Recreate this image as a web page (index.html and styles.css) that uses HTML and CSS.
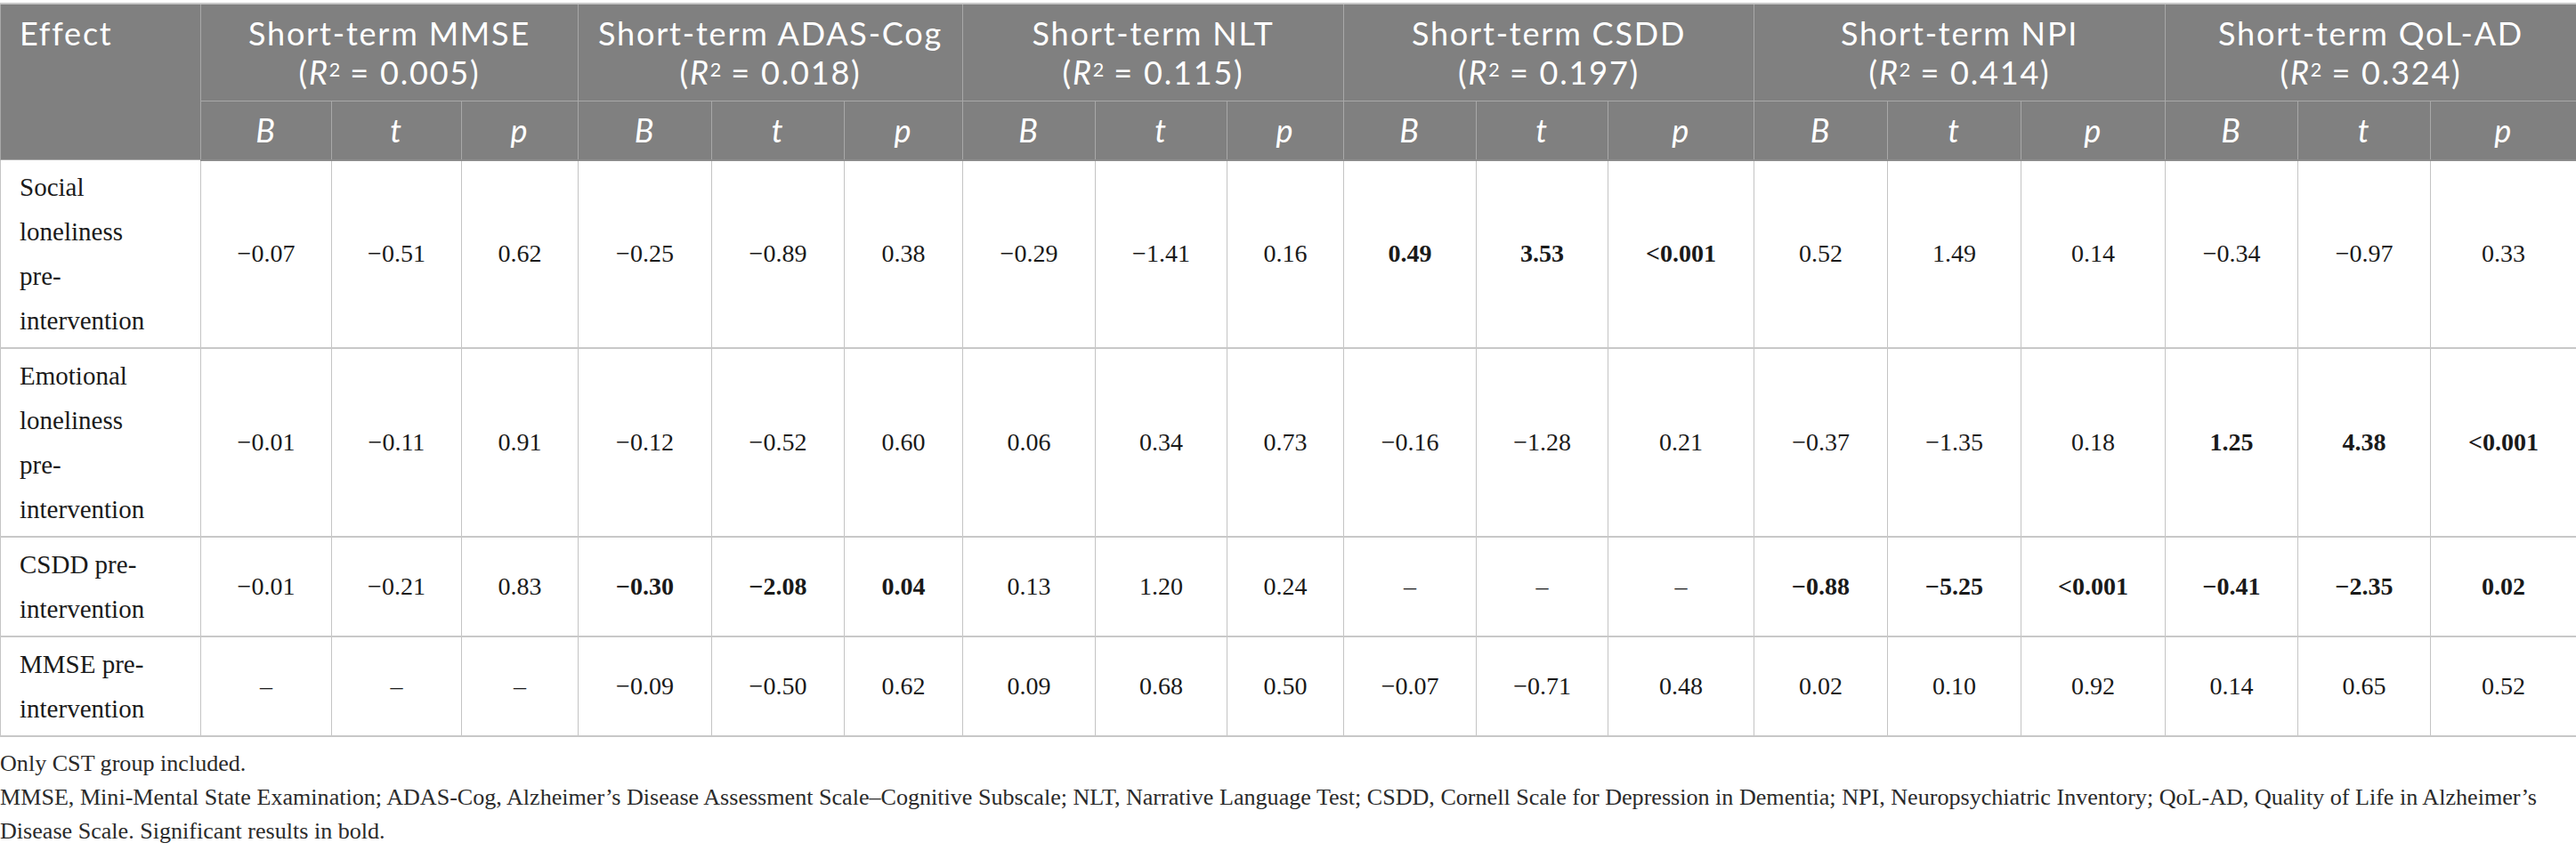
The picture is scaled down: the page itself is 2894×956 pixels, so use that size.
FILE: index.html
```html
<!DOCTYPE html>
<html lang="en">
<head>
<meta charset="utf-8">
<title>Table</title>
<link rel="stylesheet" href="styles.css">
</head>
<body>
<div class="wrap">
<table class="results">
<colgroup>
<col class="c-effect">
<col class="c147"><col class="c146"><col class="c131">
<col class="c150"><col class="c149"><col class="c133">
<col class="c149"><col class="c148"><col class="c131">
<col class="c149"><col class="c148"><col class="c164">
<col class="c150"><col class="c150"><col class="c162">
<col class="c149"><col class="c149"><col class="c164">
</colgroup>
<thead>
<tr>
<th rowspan="2" class="effect-h">Effect</th>
<th colspan="3">Short-term MMSE<br>(<i>R</i><sup>2</sup> = 0.005)</th>
<th colspan="3">Short-term ADAS-Cog<br>(<i>R</i><sup>2</sup> = 0.018)</th>
<th colspan="3">Short-term NLT<br>(<i>R</i><sup>2</sup> = 0.115)</th>
<th colspan="3">Short-term CSDD<br>(<i>R</i><sup>2</sup> = 0.197)</th>
<th colspan="3">Short-term NPI<br>(<i>R</i><sup>2</sup> = 0.414)</th>
<th colspan="3">Short-term QoL-AD<br>(<i>R</i><sup>2</sup> = 0.324)</th>
</tr>
<tr class="sub">
<th><i>B</i></th><th><i>t</i></th><th><i>p</i></th>
<th><i>B</i></th><th><i>t</i></th><th><i>p</i></th>
<th><i>B</i></th><th><i>t</i></th><th><i>p</i></th>
<th><i>B</i></th><th><i>t</i></th><th><i>p</i></th>
<th><i>B</i></th><th><i>t</i></th><th><i>p</i></th>
<th><i>B</i></th><th><i>t</i></th><th><i>p</i></th>
</tr>
</thead>
<tbody>
<tr>
<td class="effect">Social loneliness pre-intervention</td>
<td>−0.07</td><td>−0.51</td><td>0.62</td>
<td>−0.25</td><td>−0.89</td><td>0.38</td>
<td>−0.29</td><td>−1.41</td><td>0.16</td>
<td><b>0.49</b></td><td><b>3.53</b></td><td><b>&lt;0.001</b></td>
<td>0.52</td><td>1.49</td><td>0.14</td>
<td>−0.34</td><td>−0.97</td><td>0.33</td>
</tr>
<tr>
<td class="effect">Emotional loneliness pre-intervention</td>
<td>−0.01</td><td>−0.11</td><td>0.91</td>
<td>−0.12</td><td>−0.52</td><td>0.60</td>
<td>0.06</td><td>0.34</td><td>0.73</td>
<td>−0.16</td><td>−1.28</td><td>0.21</td>
<td>−0.37</td><td>−1.35</td><td>0.18</td>
<td><b>1.25</b></td><td><b>4.38</b></td><td><b>&lt;0.001</b></td>
</tr>
<tr>
<td class="effect">CSDD pre-intervention</td>
<td>−0.01</td><td>−0.21</td><td>0.83</td>
<td><b>−0.30</b></td><td><b>−2.08</b></td><td><b>0.04</b></td>
<td>0.13</td><td>1.20</td><td>0.24</td>
<td>–</td><td>–</td><td>–</td>
<td><b>−0.88</b></td><td><b>−5.25</b></td><td><b>&lt;0.001</b></td>
<td><b>−0.41</b></td><td><b>−2.35</b></td><td><b>0.02</b></td>
</tr>
<tr>
<td class="effect">MMSE pre-intervention</td>
<td>–</td><td>–</td><td>–</td>
<td>−0.09</td><td>−0.50</td><td>0.62</td>
<td>0.09</td><td>0.68</td><td>0.50</td>
<td>−0.07</td><td>−0.71</td><td>0.48</td>
<td>0.02</td><td>0.10</td><td>0.92</td>
<td>0.14</td><td>0.65</td><td>0.52</td>
</tr>
</tbody>
</table>
<div class="notes">
<p>Only CST group included.</p>
<p>MMSE, Mini-Mental State Examination; ADAS-Cog, Alzheimer’s Disease Assessment Scale–Cognitive Subscale; NLT, Narrative Language Test; CSDD, Cornell Scale for Depression in Dementia; NPI, Neuropsychiatric Inventory; QoL-AD, Quality of Life in Alzheimer’s Disease Scale. Significant results in bold.</p>
</div>
</div>
</body>
</html>
```

FILE: styles.css
```css
html, body {
  margin: 0;
  padding: 0;
  background: #ffffff;
}

.wrap {
  padding-top: 3px;
  width: 2894px;
}

.results {
  width: 2894px;
  table-layout: fixed;
  border-collapse: collapse;
  border-top: 2px solid #c8c8c8;
}

.c-effect { width: 225px; }
.c131 { width: 131px; }
.c133 { width: 133px; }
.c146 { width: 146px; }
.c147 { width: 147px; }
.c148 { width: 148px; }
.c149 { width: 149px; }
.c150 { width: 150px; }
.c162 { width: 162px; }
.c164 { width: 164px; }

.results th {
  background: #808080;
  color: #ffffff;
  font-family: Lato, "Open Sans", "Liberation Sans", sans-serif;
  font-weight: 400;
  font-size: 36px;
  letter-spacing: 1.8px;
  line-height: 43.5px;
  padding: 11px 8px 10px;
  text-align: center;
  vertical-align: top;
  border: 1px solid #a8a8a8;
}

.results th.effect-h {
  text-align: left;
  padding-left: 21px;
}

.results th sup {
  font-size: 0.6em;
  line-height: 0;
  vertical-align: 0.4em;
  letter-spacing: 0;
}

.results thead tr.sub th {
  border-bottom: 2px solid #8c8c8c;
}

.results td {
  font-family: "Liberation Serif", "Times New Roman", serif;
  font-size: 28px;
  line-height: 50px;
  color: #1a1a1a;
  text-align: center;
  vertical-align: middle;
  padding: 5px 8px;
  border-left: 1px solid #c4c4c4;
  border-right: 1px solid #c4c4c4;
  border-bottom: 2px solid #c8c8c8;
}

.results td.effect {
  font-size: 29px;
  text-align: left;
  padding: 5px 40px 5px 21px;
}

.results td b {
  font-weight: 700;
}

.notes {
  padding-top: 11px;
  font-family: "Liberation Serif", "Times New Roman", serif;
  font-size: 26.1px;
  line-height: 38px;
  color: #2a2a2a;
}

.notes p {
  margin: 0;
}
```
